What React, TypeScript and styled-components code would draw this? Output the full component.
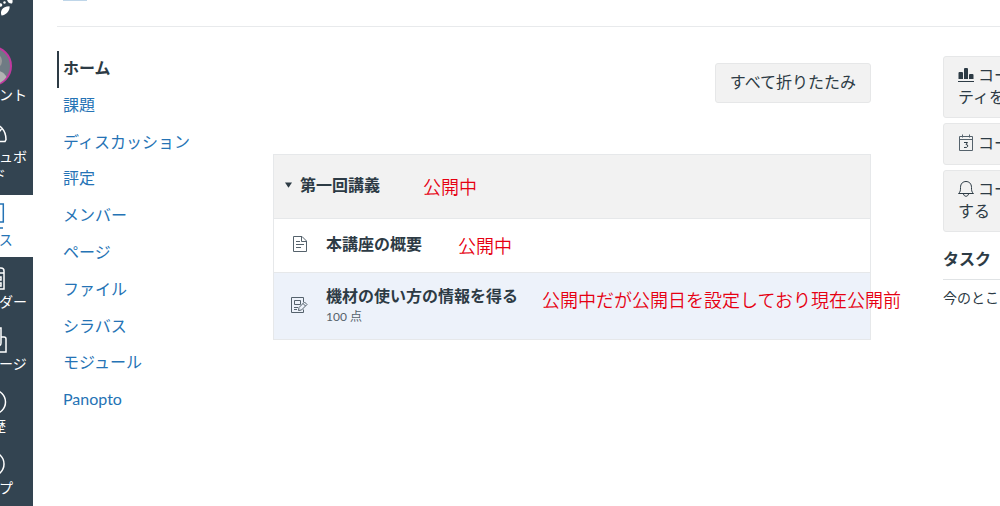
import React from "react";
import styled, { createGlobalStyle, css } from "styled-components";

const GlobalStyle = createGlobalStyle`
  *, *::before, *::after { box-sizing: border-box; }
  body {
    margin: 0;
    background: #fff;
    color: #2d3b45;
    font-family: Lato, "Noto Sans CJK JP", sans-serif;
    font-size: 16px;
    line-height: 24px;
  }
  ul, h2, h3, p { margin: 0; padding: 0; font-size: inherit; }
  ul { list-style: none; }
  a { color: inherit; text-decoration: none; }
  svg { display: block; flex: none; }
`;

const Page = styled.div`
  display: flex;
  height: 100vh;
  overflow: hidden;
`;

const Rail = styled.nav`
  flex: none;
  width: 33px;
  display: flex;
  justify-content: flex-end;
  overflow: hidden;
  background: #334451;
  color: #fff;
`;

const RailList = styled.ul`
  flex: none;
  width: 84px;
`;

const RailLink = styled.a<{ $active?: boolean; $roomy?: boolean }>`
  display: flex;
  flex-direction: column;
  align-items: center;
  padding: 8px 6px ${(p) => (p.$roomy ? 11 : 8)}px 8px;
  font-size: 14px;
  line-height: 18px;
  text-align: center;
  word-break: break-all;
  ${(p) => p.$active && css`
    background: #fff;
    color: #2573b5;
  `}
`;

const RailIcon = styled.span`
  display: flex;
  align-items: center;
  height: 26px;
  margin-bottom: 2px;
`;

const LogoLink = styled.a`
  display: flex;
  justify-content: center;
  height: 38px;
`;

const Content = styled.div`
  flex: 1;
  min-width: 0;
  padding-left: 24px;
`;

const TopBar = styled.header`
  height: 27px;
  padding-left: 6px;
  border-bottom: 1px solid #e8eaec;
`;

const MenuEdge = styled.div`
  width: 24px;
  height: 1px;
  background: #bfd6e9;
`;

const Columns = styled.div`
  display: flex;
  align-items: flex-start;
  padding-top: 24px;
`;

const CourseNav = styled.nav`
  flex: none;
  width: 216px;
`;

const CourseList = styled.ul`
  display: grid;
  grid-auto-rows: 1fr;
  height: 368px;
`;

const CourseLink = styled.a<{ $active?: boolean }>`
  display: block;
  height: 100%;
  padding: 5px 0 7px 6px;
  color: #2573b5;
  ${(p) => p.$active && css`
    padding-left: 4px;
    border-left: 2px solid #2d3b45;
    color: #2d3b45;
    font-weight: 700;
  `}
`;

const Main = styled.main`
  flex: 1;
  min-width: 0;
  padding-top: 12px;
`;

const Toolbar = styled.div`
  display: flex;
  justify-content: flex-end;
  margin-bottom: 51px;
`;

const Button = styled.button`
  padding: 6px 14px 8px;
  border: 1px solid #e6e7e8;
  border-radius: 3px;
  background: #f2f2f2;
  color: #2d3b45;
  font: inherit;
`;

const Module = styled.section`
  border: 1px solid #e6e8ea;
`;

const ModuleHeader = styled.div`
  position: relative;
  display: flex;
  align-items: center;
  gap: 7px;
  height: 63px;
  padding: 0 0 3px 10px;
  background: #f2f2f2;
`;

const ModuleTitle = styled.h2`
  font-size: 16px;
  font-weight: 700;
`;

const ModuleRow = styled.div<{ $tall?: boolean }>`
  position: relative;
  display: flex;
  align-items: center;
  height: ${(p) => (p.$tall ? 67 : 54)}px;
  padding: 0 0 3px 16px;
  border-top: 1px solid #e6e8ea;
  background: ${(p) => (p.$tall ? "#edf2fa" : "#fff")};
`;

const RowIcon = styled.span`
  flex: none;
  width: 36px;
`;

const ItemTitle = styled.a`
  display: block;
  font-weight: 700;
`;

const Points = styled.p`
  color: #55626c;
  font-size: 12px;
  line-height: 18px;
`;

const Note = styled.span<{ $left: number; $top: number }>`
  position: absolute;
  left: ${(p) => p.$left}px;
  top: ${(p) => p.$top}px;
  color: #e60012;
  font-family: "Noto Sans CJK JP", sans-serif;
  font-size: 18px;
  font-weight: 350;
  line-height: 26px;
  white-space: nowrap;
  z-index: 1;
`;

const Aside = styled.aside`
  flex: none;
  width: 57px;
  margin-left: 72px;
  padding-top: 5px;
  overflow: hidden;
`;

const AsideInner = styled.div`
  width: 240px;
`;

const AsideButton = styled.button`
  display: block;
  width: 100%;
  min-height: 42px;
  margin-bottom: 5px;
  padding: 7px 14px 9px;
  border: 1px solid #e6e7e8;
  border-radius: 3px;
  background: #f2f2f2;
  color: #2d3b45;
  font: inherit;
  line-height: 22px;
  text-align: left;
`;

const AsideLine = styled.span`
  display: flex;
  align-items: center;
  gap: 4px;
`;

const TaskTitle = styled.h2`
  padding: 10px 0 8px;
  border-bottom: 1px solid #e0e3e5;
  font-size: 16px;
  font-weight: 700;
`;

const TaskText = styled.p`
  padding-top: 8px;
  font-size: 14px;
  line-height: 20px;
`;

const stroke = { fill: "none", stroke: "currentColor", strokeWidth: 1.5 } as const;

const Logo = () => (
  <svg width="86" height="18" viewBox="0 0 86 18" fill="#fff">
    <path d="M53.500 15.500C52 11.500 53.500 6.500 61.500 6.200C62.500 10 58 15 53.500 15.500Z" />
    <path d="M59 0H64.500Q65 2.500 64 3.500Q60.500 4 59 0Z" />
    <circle cx="52.500" cy="5" r="1.800" />
    <circle cx="56.500" cy="2.500" r="1.200" />
  </svg>
);

const Avatar = () => (
  <svg width="40" height="40" viewBox="0 0 40 40">
    <circle cx="20" cy="20" r="19" fill="#6f7b84" stroke="#c0399f" strokeWidth="2" />
    <circle cx="22" cy="15" r="8" fill="#9b9b9b" />
    <path d="M5 32C8 21 30 21 34.500 31A18 18 0 0 1 5 32Z" fill="#b3b3b3" />
  </svg>
);

const Gauge = () => (
  <svg width="30" height="26" viewBox="0 0 30 26" {...stroke}>
    <path d="M1 20C1 10 7 4 15 4S29 10 29 19.500L28 21.500H21C20 18 17 17 15 17S10 18 9 21.500H2Z" />
    <path d="M15 4V9M24.500 9L22 12M5.500 9L8 12" />
  </svg>
);

const Book = () => (
  <svg width="26" height="26" viewBox="0 0 26 26" {...stroke}>
    <path d="M5 1H24.300V19H4C2 19 1 20 1 22S2 25 4 25H24M5 1C3 1 1 2 1 5V22M7 1V19M11 7H19M11 11H19" />
  </svg>
);

const Calendar = () => (
  <svg width="26" height="26" viewBox="0 0 26 26" {...stroke}>
    <path d="M4 3H22Q25 3 25 6V24H1V6Q1 3 4 3ZM7 0V5M19 0V5M1 8H25" />
    <path d="M5 12H9V15H5ZM11 12H15V15H11ZM18 12H22V15H18ZM5 18H9V21H5ZM11 18H15V21H11ZM18 18H22V21H18Z" />
  </svg>
);

const Inbox = () => (
  <svg width="30" height="26" viewBox="0 0 30 26" {...stroke}>
    <path d="M5 10V1H24V10M5 10H2V25H29V12Q29 10 27 10H24V16Q24 19 21 19H18M11 6H19M11 10H19" />
  </svg>
);

const Clock = () => (
  <svg width="30" height="26" viewBox="0 0 30 26" {...stroke}>
    <circle cx="16.500" cy="13" r="12" />
    <path d="M16 6V14H10" />
  </svg>
);

const Help = () => (
  <svg width="26" height="26" viewBox="0 0 26 26" {...stroke}>
    <circle cx="13" cy="13" r="12" />
    <path d="M9.500 10C9.500 5 16.500 5 16.500 10C16.500 13 13 12 13 16M13 18V20" />
  </svg>
);

const Caret = () => (
  <svg width="9" height="6" viewBox="0 0 9 6" fill="#2d3b45">
    <path d="M1 0.500H8L4.500 5.800Z" />
  </svg>
);

const Document = () => (
  <svg width="20" height="18" viewBox="0 0 20 18" fill="none" stroke="#55626c">
    <path d="M3.500 1.500H12L16.500 6V16.500H3.500ZM11.500 1.500V6.500H16.500M6 6.500H10M6 9.500H14M6 12.500H11" />
  </svg>
);

const Assignment = () => (
  <svg width="18" height="18" viewBox="0 0 18 18" fill="none" stroke="#55626c">
    <path d="M13.500 6V1.500H1.500V16.500H13.500V13.500M4.500 4.500H10.500V8.500H4.500ZM4 11.500H8M4 13.500H7" />
    <path d="M9 11.500L14.500 6L17 8.500L11.500 14L8.500 14.500ZM13 7.500L15.500 10" />
  </svg>
);

const Bars = () => (
  <svg width="16" height="16" viewBox="0 0 16 16" fill="#2d3b45">
    <path d="M0.500 6Q0.500 5 1.500 5H4Q5 5 5 6V12H0.500ZM6 2Q6 1 7 1H9Q10 1 10 2V12H6ZM11 8Q11 7 12 7H14.500Q15.500 7 15.500 8V12H11ZM0 14H16V15H0Z" />
  </svg>
);

const SmallCalendar = () => (
  <svg width="16" height="18" viewBox="0 0 16 18" fill="none" stroke="#55626c">
    <path d="M1.500 2.500H14.500V16.500H1.500ZM1.500 5.500H14.500M4.500 0.500V3.500M11.500 0.500V3.500" />
    <path d="M6 8.500H9.500L8 10.500Q10 10.500 9.800 12.200T6 13.500" stroke="#2d3b45" />
  </svg>
);

const Bell = () => (
  <svg width="16" height="18" viewBox="0 0 16 18" fill="none" stroke="#2d3b45">
    <path d="M0.500 13.500C2.500 12 2.500 10 2.500 7.500C2.500 3.500 5 1.500 8 1.500S13.500 3.500 13.500 7.500C13.500 10 13.500 12 15.500 13.500ZM5.500 14C6 17 10 17 10.500 14" />
  </svg>
);

const railItems = [
  { label: "ダッシュボード", Icon: Gauge, roomy: true },
  { label: "コース", Icon: Book, active: true },
  { label: "カレンダー", Icon: Calendar },
  { label: "メッセージ", Icon: Inbox },
  { label: "履歴", Icon: Clock },
  { label: "ヘルプ", Icon: Help },
];

const courseLinks = [
  "ホーム", "課題", "ディスカッション", "評定", "メンバー",
  "ページ", "ファイル", "シラバス", "モジュール", "Panopto",
];

export default function App() {
  return (
    <>
      <GlobalStyle />
      <Page>
        <Rail>
          <RailList>
            <li><LogoLink href="#" aria-label="Canvas"><Logo /></LogoLink></li>
            <li><RailLink href="#"><Avatar />アカウント</RailLink></li>
            {railItems.map(({ label, Icon, active, roomy }) => (
              <li key={label}>
                <RailLink href="#" $active={active} $roomy={roomy}>
                  <RailIcon><Icon /></RailIcon>
                  {label}
                </RailLink>
              </li>
            ))}
          </RailList>
        </Rail>
        <Content>
          <TopBar><MenuEdge /></TopBar>
          <Columns>
            <CourseNav>
              <CourseList>
                {courseLinks.map((label, i) => (
                  <li key={label}><CourseLink href="#" $active={i === 0}>{label}</CourseLink></li>
                ))}
              </CourseList>
            </CourseNav>
            <Main>
              <Toolbar><Button>すべて折りたたみ</Button></Toolbar>
              <Module>
                <ModuleHeader>
                  <Caret />
                  <ModuleTitle>第一回講義</ModuleTitle>
                  <Note $left={149} $top={18}>公開中</Note>
                </ModuleHeader>
                <ModuleRow>
                  <RowIcon><Document /></RowIcon>
                  <ItemTitle href="#">本講座の概要</ItemTitle>
                  <Note $left={184} $top={13}>公開中</Note>
                </ModuleRow>
                <ModuleRow $tall>
                  <RowIcon><Assignment /></RowIcon>
                  <div>
                    <ItemTitle href="#">機材の使い方の情報を得る</ItemTitle>
                    <Points>100 点</Points>
                  </div>
                  <Note $left={268} $top={13}>公開中だが公開日を設定しており現在公開前</Note>
                </ModuleRow>
              </Module>
            </Main>
            <Aside>
              <AsideInner>
                <AsideButton><AsideLine><Bars />コース</AsideLine>ティを</AsideButton>
                <AsideButton><AsideLine><SmallCalendar />コース</AsideLine></AsideButton>
                <AsideButton><AsideLine><Bell />コース</AsideLine>する</AsideButton>
                <TaskTitle>タスク</TaskTitle>
                <TaskText>今のとこ</TaskText>
              </AsideInner>
            </Aside>
          </Columns>
        </Content>
      </Page>
    </>
  );
}
